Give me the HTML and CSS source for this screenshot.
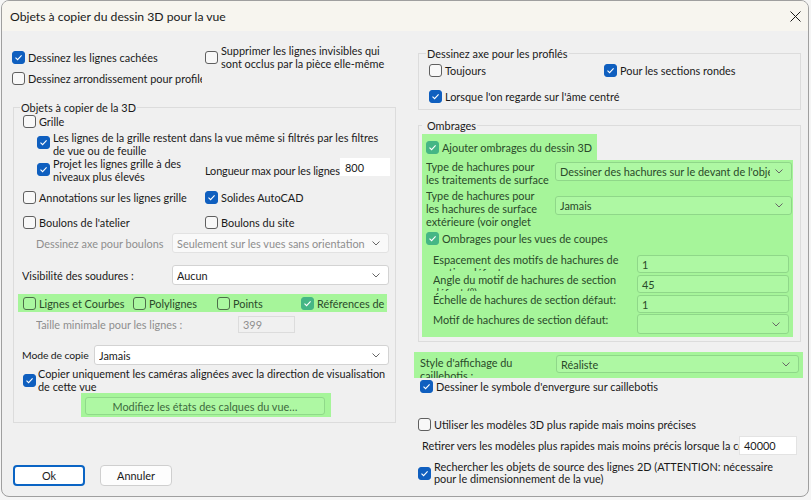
FILE: index.html
```html
<!DOCTYPE html>
<html lang="fr">
<head>
<meta charset="utf-8">
<title>Objets à copier du dessin 3D pour la vue</title>
<link rel="stylesheet" href="styles.css">
</head>
<body>
<div class="dialog">
  <div class="titlebar">
    <span class="title">Objets à copier du dessin 3D pour la vue</span>
    <svg class="close" width="11" height="11" viewBox="0 0 11 11"><path d="M0.5 0.5 10.5 10.5M10.5 0.5 0.5 10.5"/></svg>
  </div>

  <div class="content">
    <!-- left column -->
    <div class="col left">
      <div class="row r-top">
        <label class="chk w193"><span class="cb on"><svg viewBox="0 0 11 11"><path d="M2.5 5.6 4.6 7.7 8.6 3.4"/></svg></span><span>Dessinez les lignes cachées</span></label>
        <label class="chk"><span class="cb"></span><span class="two">Supprimer les lignes invisibles qui<br>sont occlus par la pièce elle-même</span></label>
      </div>
      <div class="row r-round">
        <label class="chk clip w190"><span class="cb"></span><span>Dessinez arrondissement pour profilés</span></label>
      </div>

      <fieldset class="group g-obj">
        <legend>Objets à copier de la 3D</legend>
        <div class="row r-grille">
          <label class="chk"><span class="cb"></span><span>Grille</span></label>
        </div>
        <div class="row r-gf">
          <label class="chk top"><span class="cb on"><svg viewBox="0 0 11 11"><path d="M2.5 5.6 4.6 7.7 8.6 3.4"/></svg></span><span class="two">Les lignes de la grille restent dans la vue même si filtrés par les filtres<br>de vue ou de feuille</span></label>
        </div>
        <div class="row r-proj">
          <label class="chk top w168"><span class="cb on"><svg viewBox="0 0 11 11"><path d="M2.5 5.6 4.6 7.7 8.6 3.4"/></svg></span><span class="two">Projet les lignes grille à des<br>niveaux plus élevés</span></label>
          <span class="len-label">Longueur max pour les lignes</span>
          <span class="field plain len-field">800</span>
        </div>
        <div class="row r-annot">
          <label class="chk w182"><span class="cb"></span><span>Annotations sur les lignes grille</span></label>
          <label class="chk"><span class="cb on"><svg viewBox="0 0 11 11"><path d="M2.5 5.6 4.6 7.7 8.6 3.4"/></svg></span><span>Solides AutoCAD</span></label>
        </div>
        <div class="row r-boul">
          <label class="chk w182"><span class="cb"></span><span>Boulons de l'atelier</span></label>
          <label class="chk"><span class="cb"></span><span>Boulons du site</span></label>
        </div>
        <div class="row r-axe">
          <span class="lbl disabled w136">Dessinez axe pour boulons</span>
          <div class="select disabled s217"><span class="val">Seulement sur les vues sans orientation définie</span><svg class="chev" viewBox="0 0 8 5"><path d="M0.5 0.5 4 4 7.5 0.5"/></svg></div>
        </div>
        <div class="row r-vis">
          <span class="lbl w150">Visibilité des soudures :</span>
          <div class="select s217"><span class="val">Aucun</span><svg class="chev" viewBox="0 0 8 5"><path d="M0.5 0.5 4 4 7.5 0.5"/></svg></div>
        </div>
        <div class="row hl r-types">
          <label class="chk w110"><span class="cb"></span><span>Lignes et Courbes</span></label>
          <label class="chk w84"><span class="cb"></span><span>Polylignes</span></label>
          <label class="chk w84"><span class="cb"></span><span>Points</span></label>
          <label class="chk"><span class="cb on"><svg viewBox="0 0 11 11"><path d="M2.5 5.6 4.6 7.7 8.6 3.4"/></svg></span><span>Références de texte</span></label>
        </div>
        <div class="row r-taille">
          <span class="lbl disabled w202">Taille minimale pour les lignes :</span>
          <span class="field disabled f57">399</span>
        </div>
        <div class="row r-mode">
          <span class="lbl w72 mode-label">Mode de copie</span>
          <div class="select s295"><span class="val">Jamais</span><svg class="chev" viewBox="0 0 8 5"><path d="M0.5 0.5 4 4 7.5 0.5"/></svg></div>
        </div>
        <div class="row r-cam">
          <label class="chk top g2"><span class="cb on"><svg viewBox="0 0 11 11"><path d="M2.5 5.6 4.6 7.7 8.6 3.4"/></svg></span><span class="two">Copier uniquement les caméras alignées avec la direction de visualisation<br>de cette vue</span></label>
        </div>
        <div class="row hl r-btn">
          <button class="btn btn-layers" type="button">Modifiez les états des calques du vue…</button>
        </div>
      </fieldset>

      <div class="row r-actions">
        <button class="btn btn-ok" type="button">Ok</button>
        <button class="btn btn-cancel" type="button">Annuler</button>
      </div>
    </div>

    <!-- right column -->
    <div class="col right">
      <fieldset class="group g-axe">
        <legend>Dessinez axe pour les profilés</legend>
        <div class="row r-tj">
          <label class="chk w175"><span class="cb"></span><span>Toujours</span></label>
          <label class="chk"><span class="cb on"><svg viewBox="0 0 11 11"><path d="M2.5 5.6 4.6 7.7 8.6 3.4"/></svg></span><span>Pour les sections rondes</span></label>
        </div>
        <div class="row r-lrs">
          <label class="chk"><span class="cb on"><svg viewBox="0 0 11 11"><path d="M2.5 5.6 4.6 7.7 8.6 3.4"/></svg></span><span>Lorsque l'on regarde sur l'âme centré</span></label>
        </div>
      </fieldset>

      <fieldset class="group g-omb">
        <legend>Ombrages</legend>
        <div class="row hl r-add">
          <label class="chk"><span class="cb on"><svg viewBox="0 0 11 11"><path d="M2.5 5.6 4.6 7.7 8.6 3.4"/></svg></span><span>Ajouter ombrages du dessin 3D</span></label>
        </div>
        <div class="hl omb-block">
          <div class="row r-t1">
            <span class="lbl two w129">Type de hachures pour<br>les traitements de surface</span>
            <div class="select s237"><span class="val">Dessiner des hachures sur le devant de l'objet</span><svg class="chev" viewBox="0 0 8 5"><path d="M0.5 0.5 4 4 7.5 0.5"/></svg></div>
          </div>
          <div class="row r-t2">
            <span class="lbl two w129">Type de hachures pour<br>les hachures de surface<br>extérieure (voir onglet</span>
            <div class="select s237"><span class="val">Jamais</span><svg class="chev" viewBox="0 0 8 5"><path d="M0.5 0.5 4 4 7.5 0.5"/></svg></div>
          </div>
          <div class="row r-oc">
            <label class="chk"><span class="cb on"><svg viewBox="0 0 11 11"><path d="M2.5 5.6 4.6 7.7 8.6 3.4"/></svg></span><span>Ombrages pour les vues de coupes</span></label>
          </div>
          <div class="row r-num first">
            <span class="lbl num-label">Espacement des motifs de hachures de<br>section défaut:</span>
            <span class="field f152">1</span>
          </div>
          <div class="row r-num">
            <span class="lbl num-label">Angle du motif de hachures de section<br>défaut (°):</span>
            <span class="field f152">45</span>
          </div>
          <div class="row r-num">
            <span class="lbl num-label">Échelle de hachures de section défaut:</span>
            <span class="field f152">1</span>
          </div>
          <div class="row r-num">
            <span class="lbl num-label">Motif de hachures de section défaut:</span>
            <div class="select s152 tall"><span class="val"></span><svg class="chev" viewBox="0 0 8 5"><path d="M0.5 0.5 4 4 7.5 0.5"/></svg></div>
          </div>
        </div>
      </fieldset>

      <div class="row hl r-style">
        <span class="lbl two w136">Style d'affichage du<br>caillebotis :</span>
        <div class="select s243"><span class="val">Réaliste</span><svg class="chev" viewBox="0 0 8 5"><path d="M0.5 0.5 4 4 7.5 0.5"/></svg></div>
      </div>
      <div class="row r-dess">
        <label class="chk"><span class="cb on"><svg viewBox="0 0 11 11"><path d="M2.5 5.6 4.6 7.7 8.6 3.4"/></svg></span><span>Dessiner le symbole d'envergure sur caillebotis</span></label>
      </div>
      <div class="row r-util">
        <label class="chk"><span class="cb"></span><span>Utiliser les modèles 3D plus rapide mais moins précises</span></label>
      </div>
      <div class="row r-ret">
        <span class="lbl w317">Retirer vers les modèles plus rapides mais moins précis lorsque la coupe dépasse</span>
        <span class="field f58">40000</span>
      </div>
      <div class="row r-rech">
        <label class="chk"><span class="cb on"><svg viewBox="0 0 11 11"><path d="M2.5 5.6 4.6 7.7 8.6 3.4"/></svg></span><span class="two tight">Rechercher les objets de source des lignes 2D (ATTENTION: nécessaire<br>pour le dimensionnement de la vue)</span></label>
      </div>
    </div>
  </div>
</div>
</body>
</html>
```

FILE: styles.css
```css
* { box-sizing: border-box; }

html, body { margin: 0; }

body {
  width: 811px;
  height: 500px;
  overflow: hidden;
  background: #f5f5f5;
  font-family: Lato, "Liberation Sans", sans-serif;
  font-size: 10.9px;
  line-height: 13px;
  color: #1a1a1a;
}

/* window frame */
.dialog {
  width: 808px;
  height: 497px;
  margin-left: 1px;
  border: 1px solid #9f9f9f;
  border-radius: 8px;
  background: #f0f0f0;
  overflow: hidden;
  display: flex;
  flex-direction: column;
}

.titlebar {
  flex: none;
  height: 30px;
  background: #f7f5ef;
  display: flex;
  align-items: center;
  justify-content: space-between;
  padding: 0 7px 0 8px;
}

.title { font-size: 12.2px; }

.close { stroke: #1a1a1a; stroke-width: 1; fill: none; }

.content {
  flex: 1;
  display: flex;
  padding-left: 10px;
}

.col { display: flex; flex-direction: column; }
.left { width: 384px; flex: none; }
.right { width: 389px; flex: none; margin-left: 18px; }

.row { display: flex; align-items: center; flex: none; }

/* checkbox + caption */
.chk { display: flex; align-items: center; gap: 3px; white-space: nowrap; flex: none; }
.chk.top { align-items: flex-start; }
.chk.g2 { gap: 2px; }
.clip { overflow: hidden; }

.cb {
  flex: none;
  display: block;
  width: 13px;
  height: 13px;
  border: 1px solid #5f5f5f;
  border-radius: 3px;
  background: #f8f8f8;
}
.cb.on { background: #0f5fbf; border-color: #0f5fbf; }
.cb svg { display: block; width: 11px; height: 11px; fill: none; stroke: #fff; stroke-width: 1.1; }

.two { line-height: 13px; white-space: nowrap; }
.two.tight { line-height: 12.5px; }

.lbl { flex: none; white-space: nowrap; overflow: hidden; }
.disabled { color: #8e8e8e; }

.w72 { width: 72px; }
.w84 { width: 84px; }
.w110 { width: 110px; }
.w129 { width: 129px; }
.w136 { width: 136px; }
.w150 { width: 150px; }
.w168 { width: 168px; }
.w175 { width: 175px; }
.w182 { width: 182px; }
.w190 { width: 190px; }
.w193 { width: 193px; }
.w202 { width: 202px; }
.w317 { width: 317px; }

/* combo boxes and text fields */
.select, .field {
  flex: none;
  display: flex;
  align-items: center;
  background: #fff;
  border: 1px solid #d3d3d3;
  border-radius: 3px;
  padding-left: 4px;
  white-space: nowrap;
  overflow: hidden;
  color: #1a1a1a;
}
.select { height: 20px; }
.select .val { flex: 1; overflow: hidden; }
.select .chev { flex: none; width: 8px; height: 5px; margin: 0 8px 0 5px; fill: none; stroke: #666; stroke-width: 1; }
.select.disabled { background: #f9f9f9; border-color: #e2e2e2; color: #8e8e8e; }
.field.disabled { background: #f0f0f0; border-color: #dcdcdc; border-radius: 0; color: #8e8e8e; }
.field.plain { border-color: #fff; border-radius: 0; }

.s152 { width: 152px; }
.s217 { width: 217px; }
.s237 { width: 237px; height: 19px; }
.s243 { width: 243px; height: 18px; }
.s295 { width: 295px; }
.f57 { width: 57px; height: 17px; }
.f58 { width: 58px; height: 19px; border-color: #e3e3e3; border-radius: 0; }
.f152 { width: 152px; height: 18px; }

/* group boxes */
.group {
  margin: 0;
  border: 1px solid #dcdcdc;
  min-width: 0;
}
.group legend { line-height: 15px; padding: 0 1px; }

/* highlighted areas */
.hl { background: #a6f59a; color: #2a4a2a; }
.hl .cb { background: #aaf8a0; border-color: #4e6e4a; }
.hl .cb.on { background: #45b685; border-color: #45b685; }
.hl .select, .hl .field { background: #aef8a3; border-color: #8fd789; color: #2a4a2a; }

/* buttons */
.btn {
  font: inherit;
  color: #1a1a1a;
  background: #fdfdfd;
  border: 1px solid #cfcfcf;
  border-radius: 4px;
  padding: 0;
  text-align: center;
}

/* ---- left column rows ---- */
.r-top { margin-top: 12px; height: 28px; }
.r-round { height: 14px; }

.g-obj { margin: 15px 0 0 1px; width: 383px; padding: 0 5px 5px 6px; }
.r-grille { height: 13px; margin-left: 3px; }
.r-gf { margin: 3px 0 0 17px; height: 26px; align-items: flex-start; }
.r-gf .cb { margin-top: 5px; }
.r-proj { margin-left: 17px; height: 26px; align-items: flex-start; }
.r-proj .cb { margin-top: 6px; }
.len-label { width: 138px; margin-top: 6.5px; white-space: nowrap; overflow: hidden; letter-spacing: -0.12px; }
.len-field { width: 50px; height: 18px; margin-top: 1px; }
.r-annot { margin: 8px 0 0 3px; height: 13px; }
.r-boul { margin: 12px 0 0 3px; height: 13px; }
.r-axe { margin: 4px 0 0 16px; height: 20px; }
.r-vis { margin: 12px 0 0 2px; height: 20px; }
.r-types { margin: 9px 0 0 -2px; width: 369px; height: 18px; padding-left: 5px; overflow: hidden; }
.r-taille { margin: 4px 0 0 16px; height: 17px; }
.r-mode { margin: 12px 0 0 2px; height: 20px; }
.mode-label { font-size: 10.4px; letter-spacing: -0.1px; }
.r-cam { margin: 2px 0 0 3px; height: 26px; align-items: flex-start; }
.r-cam .cb { margin-top: 7px; }
.r-btn { margin-left: 61px; width: 250px; height: 24px; padding: 4px 0 2px 4px; align-items: flex-start; }
.btn-layers { width: 240px; height: 18px; background: #aef8a3; border-color: #90d98a; border-radius: 3px; color: #3d6a3d; }

.r-actions { margin: 42px 0 0 1px; height: 21px; }
.btn-ok { width: 72px; height: 21px; border: 2px solid #0a64c4; background: #fff; }
.btn-cancel { width: 72px; height: 21px; margin-left: 15px; }

/* ---- right column rows ---- */
.g-axe { margin: 15px 0 0 4px; width: 383px; padding: 0 5px 6px 7px; }
.r-tj { margin: 3px 0 0 3px; height: 13px; }
.r-lrs { margin: 13px 0 0 3px; height: 13px; }

.g-omb { margin: 8px 0 0 4px; width: 383px; padding: 0 4px 4px 3px; }
.g-omb legend { padding: 0 1px 0 5px; }
.r-add { margin-top: 1px; width: 175px; height: 26px; padding-left: 4px; }
.omb-block { width: 371px; padding: 0 1px 4px 4px; display: flex; flex-direction: column; }
.r-t1 { height: 27px; align-items: flex-start; }
.r-t1 .select { margin-top: 2px; }
.r-t2 { margin-top: 2px; height: 39px; align-items: flex-start; }
.r-t2 .select { margin-top: 7px; }
.r-oc { margin-top: 4px; height: 13px; }
.r-num { margin-left: 7px; height: 20px; align-items: flex-start; }
.r-num.first { margin-top: 8px; }
.num-label { width: 204px; height: 18px; line-height: 13px; }
.r-num .field { margin-top: 2px; }
.r-num .select.tall { margin-top: 1px; height: 20px; }

.r-style { margin-top: 10px; width: 389px; height: 26px; padding-left: 6px; overflow: hidden; align-items: flex-start; }
.r-style .lbl { margin-top: 3.5px; overflow: visible; }
.r-style .select { margin-top: 3px; }
.r-dess { margin: 2px 0 0 6px; height: 13px; }
.r-util { margin: 25px 0 0 4px; height: 13px; }
.r-ret { margin: 5px 0 0 8px; height: 19px; }
.r-rech { margin: 5.5px 0 0 4px; height: 25px; }
```
